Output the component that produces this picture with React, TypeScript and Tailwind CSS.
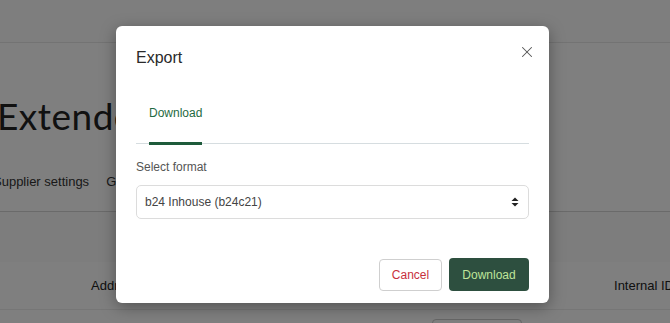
import React from "react";
import { X } from "lucide-react";

function App() {
  return (
    <div className="relative h-[323px] w-[670px] overflow-hidden bg-white font-['Liberation_Sans',Arial,sans-serif]">
      {/* page behind the dialog */}
      <div className="h-[43px] border-b border-[#e6e6e6] bg-[#fdfdfd]" />
      <div className="bg-white">
        <h1 className="ml-[-3px] pt-[53px] text-[37px] leading-[40px] font-['Lato',sans-serif] font-normal tracking-[0.5px] text-[#222]">
          Extended
        </h1>
        <div className="ml-[-7px] mt-[38px] flex h-[38px] items-start gap-[17px] border-b border-[#d4d4d4] text-[13px] leading-[16px] text-[#333]">
          <span>Supplier settings</span>
          <span>Global</span>
        </div>
        <div className="h-[50px] bg-[#fafafa]" />
        <div className="flex h-[48px] items-center border-b border-[#ececec] bg-[#fefefe] text-[13px] text-[#222]">
          <span className="ml-[91px]">Address</span>
          <span className="ml-auto mr-[-4px]">Internal ID</span>
        </div>
        <div className="h-[20px] bg-white pt-[9px]">
          <div className="ml-[432px] h-[20px] w-[90px] rounded border border-[#ccc]" />
        </div>
      </div>

      {/* overlay */}
      <div className="absolute inset-0 bg-black/50" />

      {/* dialog */}
      <div className="absolute left-[116px] top-[26px] flex h-[277px] w-[433px] flex-col rounded-[6px] bg-white px-5 shadow-[0_4px_16px_rgba(0,0,0,0.35)]">
        <div className="flex items-start justify-between pt-[22px]">
          <h2 className="text-[16px] leading-[20px] text-[#2a2a2a]">Export</h2>
          <button className="mr-[-7px] mt-[-5px] text-[#555]">
            <X size={18} strokeWidth={1.4} />
          </button>
        </div>

        <div className="mt-[38px] flex border-b border-[#d6dde0]">
          <div className="ml-[13px] mb-[-2px] border-b-[3px] border-[#1e5b3b] pb-[22px] text-[12px] leading-[14px] text-[#1f6a42]">
            Download
          </div>
        </div>

        <label className="mt-[16px] text-[12px] leading-[14px] text-[#555]">Select format</label>
        <div className="mt-[11px] flex h-[34px] items-center justify-between rounded-[5px] border border-[#dcdcdc] px-[8px] text-[12px] text-[#444]">
          <span>b24 Inhouse (b24c21)</span>
          <svg width="8" height="10" viewBox="0 0 8 10" className="mr-[1px]">
            <path d="M4 0.5 L7.5 4 H0.5 Z" fill="#222" />
            <path d="M4 9.5 L7.5 6 H0.5 Z" fill="#222" />
          </svg>
        </div>

        <div className="mt-auto mb-[12px] flex justify-end gap-[7px]">
          <button className="mt-[1px] h-[32px] w-[63px] rounded-[4px] border border-[#cfcfcf] bg-white text-[12px] text-[#c7303c]">
            Cancel
          </button>
          <button className="h-[33px] w-[80px] rounded-[4px] bg-[#2d4f3f] text-[12px] text-[#bfe59a]">
            Download
          </button>
        </div>
      </div>
    </div>
  );
}

export default App;
